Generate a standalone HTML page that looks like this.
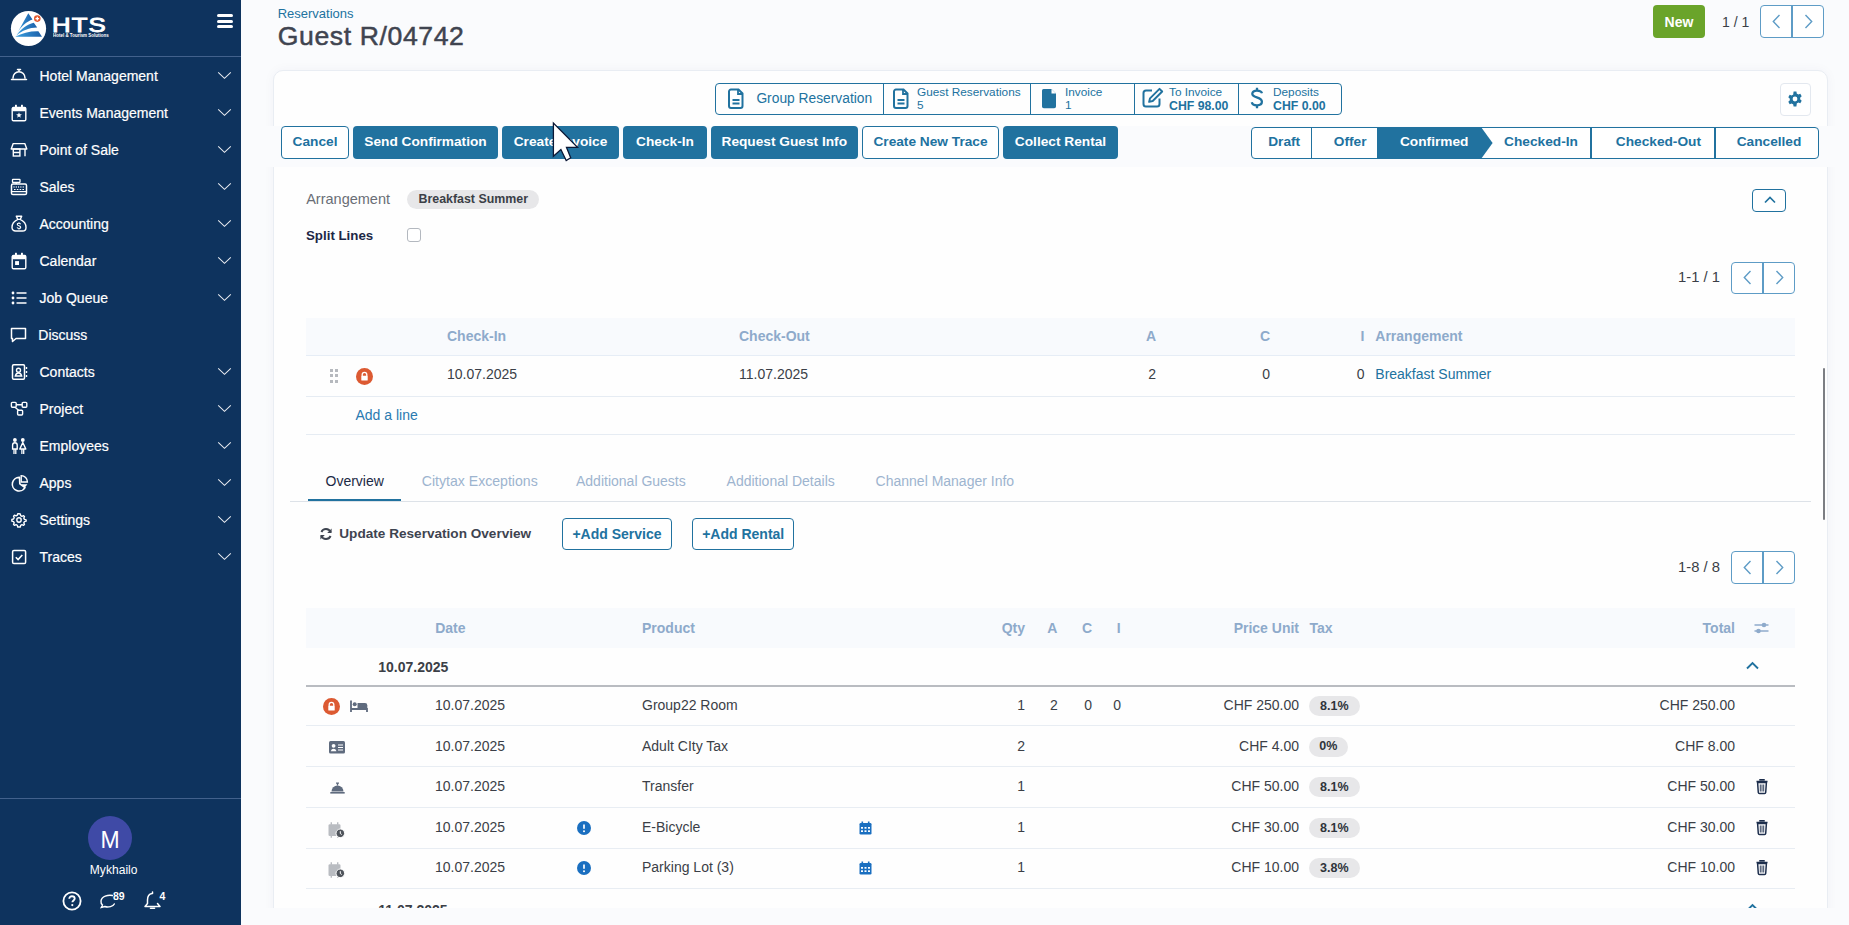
<!DOCTYPE html><html><head><meta charset="utf-8"><style>
*{box-sizing:border-box}
html,body{margin:0;padding:0}
body{width:1849px;height:925px;overflow:hidden;position:relative;background:#fafbfd;font-family:"Liberation Sans", sans-serif;}
.a{position:absolute}
.t{position:absolute;line-height:1;white-space:nowrap}
svg{position:absolute;overflow:visible}
</style></head><body><div class="a" style="left:0px;top:0px;width:241px;height:925px;background:#0e335e"></div>
<svg style="left:0;top:0" width="120" height="56" viewBox="0 0 120 56">
<defs><linearGradient id="lg" x1="0" x2="1" y1="0" y2="0"><stop offset="0" stop-color="#3aa0e0"/><stop offset="1" stop-color="#1c5fa8"/></linearGradient></defs>
<circle cx="28.5" cy="28.5" r="17.6" fill="#fff"/>
<path d="M28.3 13.2 L32.5 19.6 C27 21.5 21 26 16.5 34.5 Z" fill="url(#lg)"/>
<path d="M33.8 22.8 L37.2 27.6 C30 27.5 22 30.5 16.2 35.8 C21 29 27 24.5 33.8 22.8Z" fill="url(#lg)"/>
<path d="M38.4 31.2 L42 36.8 L15.2 36.8 C22 33 30 31 38.4 31.2Z" fill="url(#lg)"/>
<circle cx="37.3" cy="18.6" r="3.3" fill="#e2562b"/>
<path d="M37.3 16.8v3.6M35.5 18.6h3.6" stroke="#fff" stroke-width="1.3"/>
</svg>
<div class="t" style="left:51.6px;top:14.72px;font-size:20.3px;color:#fff;transform:scaleX(1.27);transform-origin:0 0;letter-spacing:0.9px;-webkit-text-stroke:0.9px #fff">HTS</div>
<div class="t" style="left:52.8px;top:33.61px;font-size:4.6px;color:#fff;font-weight:bold;transform:scaleX(0.97);transform-origin:0 0">Hotel &amp; Tourism Solutions</div>
<div class="a" style="left:216.8px;top:14.2px;width:16.4px;height:2.9px;background:#fff;border-radius:1.5px"></div>
<div class="a" style="left:216.8px;top:19.8px;width:16.4px;height:2.9px;background:#fff;border-radius:1.5px"></div>
<div class="a" style="left:216.8px;top:25.4px;width:16.4px;height:2.9px;background:#fff;border-radius:1.5px"></div>
<div class="a" style="left:0px;top:56px;width:241px;height:1.2px;background:#42618c"></div>
<div class="t" style="left:39.5px;top:69.25px;font-size:14px;color:#fff;-webkit-text-stroke:0.2px #fff">Hotel Management</div>
<svg style="left:10px;top:67px" width="18" height="18" viewBox="0 0 18 18"><path d="M1.5 12.5h15M3 11c0-3.5 2.7-6.3 6-6.3s6 2.8 6 6.3M9 4.7V2.8M7.5 2.5h3" stroke="#fff" stroke-width="1.5" fill="none" stroke-linecap="round"/></svg>
<svg style="left:217px;top:70.5px" width="15" height="9" viewBox="0 0 15 9"><path d="M1.2 1.3l6.3 6 6.3-6" fill="none" stroke="#e8ebf0" stroke-width="1.05"/></svg>
<div class="t" style="left:39.5px;top:106.25px;font-size:14px;color:#fff;-webkit-text-stroke:0.2px #fff">Events Management</div>
<svg style="left:10px;top:104px" width="18" height="18" viewBox="0 0 18 18"><path d="M3.5 3.5h11a1.3 1.3 0 0 1 1.3 1.3v10.6a1.3 1.3 0 0 1-1.3 1.3h-11a1.3 1.3 0 0 1-1.3-1.3V4.8a1.3 1.3 0 0 1 1.3-1.3z" fill="none" stroke="#fff" stroke-width="1.4"/><rect x="2" y="3" width="14" height="4.2" rx="1.5" fill="#fff"/><rect x="5" y="0.8" width="1.9" height="2.6" fill="#fff"/><rect x="11" y="0.8" width="1.9" height="2.6" fill="#fff"/><path d="M9 8.3L9.76 10.25 11.85 10.37 10.24 11.7 10.76 13.73 9 12.6 7.24 13.73 7.76 11.7 6.15 10.37 8.24 10.25z" fill="#fff"/></svg>
<svg style="left:217px;top:107.5px" width="15" height="9" viewBox="0 0 15 9"><path d="M1.2 1.3l6.3 6 6.3-6" fill="none" stroke="#e8ebf0" stroke-width="1.05"/></svg>
<div class="t" style="left:39.5px;top:143.25px;font-size:14px;color:#fff;-webkit-text-stroke:0.2px #fff">Point of Sale</div>
<svg style="left:10px;top:141px" width="18" height="18" viewBox="0 0 18 18"><path d="M1.2 8L3.2 2.6h11.6L16.8 8z" fill="none" stroke="#fff" stroke-width="1.4" stroke-linejoin="round"/><rect x="3.3" y="8" width="6.6" height="7" fill="none" stroke="#fff" stroke-width="1.4"/><path d="M3.3 11.5h6.6M15 8v7.2" stroke="#fff" stroke-width="1.4"/></svg>
<svg style="left:217px;top:144.5px" width="15" height="9" viewBox="0 0 15 9"><path d="M1.2 1.3l6.3 6 6.3-6" fill="none" stroke="#e8ebf0" stroke-width="1.05"/></svg>
<div class="t" style="left:39.5px;top:180.25px;font-size:14px;color:#fff;-webkit-text-stroke:0.2px #fff">Sales</div>
<svg style="left:10px;top:178px" width="18" height="18" viewBox="0 0 18 18"><rect x="2.5" y="1.3" width="7.5" height="3.2" rx=".5" fill="none" stroke="#fff" stroke-width="1.3"/><path d="M6.2 4.5v1.5" stroke="#fff" stroke-width="1.3"/><rect x="1.5" y="6" width="15" height="10.6" rx="1.4" fill="none" stroke="#fff" stroke-width="1.5"/><path d="M4 8.3v1.4M6.3 8.3v1.4M8.6 8.3v1.4M10.9 8.3v1.4M13.2 8.3v1.4" stroke="#fff" stroke-width="1"/><path d="M4 11.5h1.6M6.8 11.5h1.6M9.6 11.5h1.6M12.4 11.5h1.6" stroke="#fff" stroke-width="1"/><path d="M1.5 13.6h15" stroke="#fff" stroke-width="1.2"/></svg>
<svg style="left:217px;top:181.5px" width="15" height="9" viewBox="0 0 15 9"><path d="M1.2 1.3l6.3 6 6.3-6" fill="none" stroke="#e8ebf0" stroke-width="1.05"/></svg>
<div class="t" style="left:39.5px;top:217.25px;font-size:14px;color:#fff;-webkit-text-stroke:0.2px #fff">Accounting</div>
<svg style="left:10px;top:215px" width="18" height="18" viewBox="0 0 18 18"><path d="M6.3 1.2h5.4l-1.5 3.2c3.2 1.5 5.8 4.6 5.8 8 0 2.2-1.4 3.6-3.6 3.6H5.6c-2.2 0-3.6-1.4-3.6-3.6 0-3.4 2.6-6.5 5.8-8z" fill="none" stroke="#fff" stroke-width="1.4" stroke-linejoin="round"/><path d="M7.8 4.4h2.4" stroke="#fff" stroke-width="1.2"/><path d="M10.6 9.2c-.3-.7-.9-1-1.7-1-1 0-1.6.5-1.6 1.2 0 1.6 3.4 1 3.4 2.8 0 .8-.7 1.3-1.8 1.3-.9 0-1.6-.4-1.8-1.1M9 7.2v.9M9 13.5v.9" fill="none" stroke="#fff" stroke-width="1.1"/></svg>
<svg style="left:217px;top:218.5px" width="15" height="9" viewBox="0 0 15 9"><path d="M1.2 1.3l6.3 6 6.3-6" fill="none" stroke="#e8ebf0" stroke-width="1.05"/></svg>
<div class="t" style="left:39.5px;top:254.25px;font-size:14px;color:#fff;-webkit-text-stroke:0.2px #fff">Calendar</div>
<svg style="left:10px;top:252px" width="18" height="18" viewBox="0 0 18 18"><path d="M3.5 3.5h11a1.3 1.3 0 0 1 1.3 1.3v10.6a1.3 1.3 0 0 1-1.3 1.3h-11a1.3 1.3 0 0 1-1.3-1.3V4.8a1.3 1.3 0 0 1 1.3-1.3z" fill="none" stroke="#fff" stroke-width="1.4"/><rect x="2" y="3" width="14" height="4.2" rx="1.5" fill="#fff"/><rect x="5" y="0.8" width="1.9" height="2.6" fill="#fff"/><rect x="11" y="0.8" width="1.9" height="2.6" fill="#fff"/><rect x="5.1" y="9.1" width="3.9" height="3.9" fill="#fff"/></svg>
<svg style="left:217px;top:255.5px" width="15" height="9" viewBox="0 0 15 9"><path d="M1.2 1.3l6.3 6 6.3-6" fill="none" stroke="#e8ebf0" stroke-width="1.05"/></svg>
<div class="t" style="left:39.5px;top:291.25px;font-size:14px;color:#fff;-webkit-text-stroke:0.2px #fff">Job Queue</div>
<svg style="left:10px;top:289px" width="18" height="18" viewBox="0 0 18 18"><circle cx="3" cy="4" r="1.4" fill="#fff"/><circle cx="3" cy="9" r="1.4" fill="#fff"/><circle cx="3" cy="14" r="1.4" fill="#fff"/><path d="M6.5 4h10M6.5 9h10M6.5 14h10" stroke="#fff" stroke-width="1.6"/></svg>
<svg style="left:217px;top:292.5px" width="15" height="9" viewBox="0 0 15 9"><path d="M1.2 1.3l6.3 6 6.3-6" fill="none" stroke="#e8ebf0" stroke-width="1.05"/></svg>
<div class="t" style="left:38.3px;top:328.25px;font-size:14px;color:#fff;-webkit-text-stroke:0.2px #fff">Discuss</div>
<svg style="left:10px;top:326px" width="18" height="18" viewBox="0 0 18 18"><path d="M1.5 2.5h14v10H6l-3.5 3v-3h-1z" fill="none" stroke="#fff" stroke-width="1.5" stroke-linejoin="round"/></svg>
<div class="t" style="left:39.5px;top:365.25px;font-size:14px;color:#fff;-webkit-text-stroke:0.2px #fff">Contacts</div>
<svg style="left:10px;top:363px" width="18" height="18" viewBox="0 0 18 18"><rect x="2.5" y="1.8" width="12" height="14.5" rx="1.2" fill="none" stroke="#fff" stroke-width="1.5"/><circle cx="8.5" cy="7.2" r="2" fill="none" stroke="#fff" stroke-width="1.4"/><path d="M5.3 13c.5-2 1.7-3 3.2-3s2.7 1 3.2 3z" fill="none" stroke="#fff" stroke-width="1.3"/><path d="M16.5 4v2M16.5 8v2M16.5 12v2" stroke="#fff" stroke-width="1.4"/></svg>
<svg style="left:217px;top:366.5px" width="15" height="9" viewBox="0 0 15 9"><path d="M1.2 1.3l6.3 6 6.3-6" fill="none" stroke="#e8ebf0" stroke-width="1.05"/></svg>
<div class="t" style="left:39.5px;top:402.25px;font-size:14px;color:#fff;-webkit-text-stroke:0.2px #fff">Project</div>
<svg style="left:10px;top:400px" width="18" height="18" viewBox="0 0 18 18"><rect x="1.4" y="2.4" width="4.8" height="4.8" rx=".9" fill="none" stroke="#fff" stroke-width="1.4"/><rect x="12.2" y="2.4" width="4.6" height="4.8" rx=".9" fill="none" stroke="#fff" stroke-width="1.4"/><rect x="7.6" y="10.2" width="5" height="4.8" rx=".9" fill="none" stroke="#fff" stroke-width="1.4"/><path d="M6.2 4.8h6M5 7.2l3.6 3" stroke="#fff" stroke-width="1.4"/></svg>
<svg style="left:217px;top:403.5px" width="15" height="9" viewBox="0 0 15 9"><path d="M1.2 1.3l6.3 6 6.3-6" fill="none" stroke="#e8ebf0" stroke-width="1.05"/></svg>
<div class="t" style="left:39.5px;top:439.25px;font-size:14px;color:#fff;-webkit-text-stroke:0.2px #fff">Employees</div>
<svg style="left:10px;top:437px" width="18" height="18" viewBox="0 0 18 18"><circle cx="4.9" cy="3" r="1.9" fill="#fff"/><circle cx="12.8" cy="3" r="1.9" fill="#fff"/><path d="M2.6 12V8a2.3 2.3 0 0 1 4.6 0v4z" fill="none" stroke="#fff" stroke-width="1.4"/><path d="M4 12v5M5.8 12v5" stroke="#fff" stroke-width="1.3"/><path d="M12.8 5.5l-3 6.5h6z" fill="none" stroke="#fff" stroke-width="1.4" stroke-linejoin="round"/><path d="M11.9 12v5M13.7 12v5" stroke="#fff" stroke-width="1.3"/></svg>
<svg style="left:217px;top:440.5px" width="15" height="9" viewBox="0 0 15 9"><path d="M1.2 1.3l6.3 6 6.3-6" fill="none" stroke="#e8ebf0" stroke-width="1.05"/></svg>
<div class="t" style="left:39.5px;top:476.25px;font-size:14px;color:#fff;-webkit-text-stroke:0.2px #fff">Apps</div>
<svg style="left:10px;top:474px" width="18" height="18" viewBox="0 0 18 18"><path d="M9.5 3.4A6.8 6.8 0 1 0 15 13.6L9.8 9.8z" fill="none" stroke="#fff" stroke-width="1.6" stroke-linejoin="round"/><path d="M11.2 1.6v6.4h6.2A6.3 6.3 0 0 0 11.2 1.6z" fill="none" stroke="#fff" stroke-width="1.4"/><path d="M11.6 10.2h5.8l-2.9 3.8z" fill="#fff"/></svg>
<svg style="left:217px;top:477.5px" width="15" height="9" viewBox="0 0 15 9"><path d="M1.2 1.3l6.3 6 6.3-6" fill="none" stroke="#e8ebf0" stroke-width="1.05"/></svg>
<div class="t" style="left:39.5px;top:513.25px;font-size:14px;color:#fff;-webkit-text-stroke:0.2px #fff">Settings</div>
<svg style="left:10px;top:511px" width="18" height="18" viewBox="0 0 18 18"><g transform="translate(9 9) scale(0.84) translate(-9 -9)"><path d="M9 1.5l1.5.3.5 2 1.5.8 1.9-.8 1.1 1.1-.8 1.9.8 1.5 2 .5v1.6l-2 .5-.8 1.5.8 1.9-1.1 1.1-1.9-.8-1.5.8-.5 2H7.5l-.5-2-1.5-.8-1.9.8-1.1-1.1.8-1.9-.8-1.5-2-.5V8.3l2-.5.8-1.5-.8-1.9 1.1-1.1 1.9.8L7 3.300 7.5 1.5z" fill="none" stroke="#fff" stroke-width="1.65" stroke-linejoin="round"/><circle cx="9" cy="9" r="2.6" fill="none" stroke="#fff" stroke-width="1.65"/></g></svg>
<svg style="left:217px;top:514.5px" width="15" height="9" viewBox="0 0 15 9"><path d="M1.2 1.3l6.3 6 6.3-6" fill="none" stroke="#e8ebf0" stroke-width="1.05"/></svg>
<div class="t" style="left:39.5px;top:550.25px;font-size:14px;color:#fff;-webkit-text-stroke:0.2px #fff">Traces</div>
<svg style="left:10px;top:548px" width="18" height="18" viewBox="0 0 18 18"><rect x="2.6" y="2.4" width="13" height="13.2" rx="1.3" fill="none" stroke="#fff" stroke-width="1.5"/><path d="M5.8 9.2l2.3 2.3 4.2-4.5" fill="none" stroke="#fff" stroke-width="1.6"/></svg>
<svg style="left:217px;top:551.5px" width="15" height="9" viewBox="0 0 15 9"><path d="M1.2 1.3l6.3 6 6.3-6" fill="none" stroke="#e8ebf0" stroke-width="1.05"/></svg>
<div class="a" style="left:0px;top:798px;width:241px;height:1.2px;background:#42618c"></div>
<div class="a" style="left:88px;top:816px;width:44px;height:44px;background:#3f4aa6;border-radius:50%"></div>
<div class="t" style="left:110px;top:828.73px;font-size:23px;color:#fff;transform:translateX(-50%)">M</div>
<div class="t" style="left:89.8px;top:863.84px;font-size:12px;color:#fff;letter-spacing:0.05px">Mykhailo</div>
<svg style="left:62px;top:891px" width="20" height="20" viewBox="0 0 20 20"><circle cx="10" cy="10" r="8.6" fill="none" stroke="#fff" stroke-width="1.8"/><path d="M7.3 7.8c0-1.6 1.2-2.6 2.7-2.6s2.7 1 2.7 2.4c0 1.8-2.3 1.9-2.3 3.7" fill="none" stroke="#fff" stroke-width="1.9"/><circle cx="10.3" cy="14.1" r="1.1" fill="#fff"/></svg>
<svg style="left:99px;top:892px" width="18" height="18" viewBox="0 0 18 18"><path d="M13.5 3.5C9 2.5 2.5 4.5 2 9c-.2 1.8.6 3.2 1.5 4l-1.2 2.5 3.5-1c3.5 1.2 8.5-.2 9.5-2.5" fill="none" stroke="#fff" stroke-width="1.4" stroke-linecap="round"/></svg>
<div class="t" style="left:113px;top:890.51px;font-size:10.5px;color:#fff;font-weight:bold;">89</div>
<svg style="left:143px;top:890px" width="19" height="21" viewBox="0 0 19 21"><path d="M9.5 2v1.5M9 3.5C6 4 4.5 6.5 4.5 10v3.5L2 16.5h15l-2.5-3" fill="none" stroke="#fff" stroke-width="1.5" stroke-linecap="round" stroke-linejoin="round"/><path d="M7.5 18.3h4" stroke="#fff" stroke-width="1.6" stroke-linecap="round"/></svg>
<div class="t" style="left:159.5px;top:890.51px;font-size:10.5px;color:#fff;font-weight:bold;">4</div>
<div class="t" style="left:277.7px;top:6.90px;font-size:13px;color:#21729f;">Reservations</div>
<div class="t" style="left:277.8px;top:23.48px;font-size:26.6px;color:#3f4450;-webkit-text-stroke:0.5px #3f4450;letter-spacing:0.6px">Guest R/04742</div>
<div class="a" style="left:1653px;top:5px;width:52px;height:33px;background:#6aa42a;border-radius:4px"></div>
<div class="t" style="left:1679px;top:15.15px;font-size:14px;color:#fff;font-weight:bold;transform:translateX(-50%)">New</div>
<div class="t" style="left:1722px;top:15.15px;font-size:14px;color:#3b3f47;">1 / 1</div>
<div class="a" style="left:1760px;top:5px;width:64px;height:33px;border:1px solid #5e9cc6;border-radius:4px;background:#fff"></div>
<div class="a" style="left:1791px;top:5px;width:2px;height:33px;background:#5e9cc6"></div>
<svg style="left:1771.5px;top:14.0px" width="9" height="15" viewBox="0 0 9 15"><path d="M7.5 1L1.3 7.5l6.2 6.5" fill="none" stroke="#5e9cc6" stroke-width="1.4"/></svg>
<svg style="left:1803.5px;top:14.0px" width="9" height="15" viewBox="0 0 9 15"><path d="M1.5 1l6.2 6.5-6.2 6.5" fill="none" stroke="#5e9cc6" stroke-width="1.4"/></svg>
<div class="a" style="left:273px;top:70px;width:1554.5px;height:860px;background:#fefefe;border:1px solid #e9edf3;border-radius:10px 10px 0 0;box-shadow:0 0 12px rgba(30,50,90,0.04)"></div>
<div class="a" style="left:241px;top:126px;width:1608px;height:41px;background:#fafbfd"></div>
<div class="a" style="left:715.4px;top:82.5px;width:627px;height:32px;border:1px solid #21729f;border-radius:4px"></div>
<div class="a" style="left:882.7px;top:82.5px;width:1px;height:32px;background:#21729f"></div>
<div class="a" style="left:1029.9px;top:82.5px;width:1px;height:32px;background:#21729f"></div>
<div class="a" style="left:1133.7px;top:82.5px;width:1px;height:32px;background:#21729f"></div>
<div class="a" style="left:1237.8px;top:82.5px;width:1px;height:32px;background:#21729f"></div>
<svg style="left:728.4px;top:87.5px" width="16" height="21" viewBox="0 0 16 21"><path d="M3 1.5h7.5l4 4V18a2 2 0 0 1-2 2H3a2 2 0 0 1-2-2V3.5a2 2 0 0 1 2-2z" fill="none" stroke="#21729f" stroke-width="2"/><path d="M10 1.5v4.5h4.5M4.5 12h7M4.5 15.5h7" fill="none" stroke="#21729f" stroke-width="1.8"/></svg>
<div class="t" style="left:756.4px;top:92.32px;font-size:13.8px;color:#21729f;">Group Reservation</div>
<svg style="left:893px;top:87.5px" width="16" height="21" viewBox="0 0 16 21"><path d="M3 1.5h7.5l4 4V18a2 2 0 0 1-2 2H3a2 2 0 0 1-2-2V3.5a2 2 0 0 1 2-2z" fill="none" stroke="#21729f" stroke-width="2"/><path d="M10 1.5v4.5h4.5M4.5 12h7M4.5 15.5h7" fill="none" stroke="#21729f" stroke-width="1.8"/></svg>
<div class="t" style="left:917px;top:86.91px;font-size:11.8px;color:#21729f;">Guest Reservations</div>
<div class="t" style="left:917px;top:100.21px;font-size:11.8px;color:#21729f;">5</div>
<svg style="left:1041px;top:87.5px" width="16" height="21" viewBox="0 0 16 21"><path d="M2.5 1h8l4.5 4.5V18.5a1.8 1.8 0 0 1-1.8 1.8H2.8A1.8 1.8 0 0 1 1 18.5V2.8A1.8 1.8 0 0 1 2.5 1z" fill="#21729f"/><path d="M10.5 1v4.5H15" fill="#fff"/></svg>
<div class="t" style="left:1065px;top:86.91px;font-size:11.8px;color:#21729f;">Invoice</div>
<div class="t" style="left:1065px;top:100.21px;font-size:11.8px;color:#21729f;">1</div>
<svg style="left:1142px;top:87px" width="22" height="21" viewBox="0 0 22 21"><path d="M10 3.5H4a2.5 2.5 0 0 0-2.5 2.5v11A2.5 2.5 0 0 0 4 19.5h11a2.5 2.5 0 0 0 2.5-2.5v-5.5" fill="none" stroke="#21729f" stroke-width="2"/><path d="M17.5 1.8l2.7 2.7-9.5 9.5-3.6.9.9-3.6z" fill="none" stroke="#21729f" stroke-width="1.9" stroke-linejoin="round"/></svg>
<div class="t" style="left:1169px;top:86.91px;font-size:11.8px;color:#21729f;">To Invoice</div>
<div class="t" style="left:1169px;top:99.79px;font-size:12.3px;color:#21729f;font-weight:bold;">CHF 98.00</div>
<svg style="left:1249.5px;top:86.5px" width="14" height="22" viewBox="0 0 14 22"><path d="M12 6.3C11.5 4.5 9.8 3.6 7 3.6 4 3.6 2.3 4.9 2.3 6.8c0 4.6 9.6 2.6 9.6 8 0 2.1-1.9 3.5-4.9 3.5-3 0-4.8-1.1-5.2-3.1" fill="none" stroke="#21729f" stroke-width="2.3"/><path d="M7 0.8v3M7 18v3.2" stroke="#21729f" stroke-width="2.3"/></svg>
<div class="t" style="left:1273px;top:86.91px;font-size:11.8px;color:#21729f;">Deposits</div>
<div class="t" style="left:1273px;top:99.79px;font-size:12.3px;color:#21729f;font-weight:bold;">CHF 0.00</div>
<div class="a" style="left:1780px;top:82.5px;width:31px;height:33px;border:1px solid #e3e8ef;border-radius:4px;background:#fff"></div>
<svg style="left:1787.2px;top:90.5px" width="16" height="16" viewBox="0 0 16 16"><path fill="#21729f" fill-rule="evenodd" d="M6.6 0.6h2.8l.45 2.05a5.6 5.6 0 0 1 1.45.84l2-.65 1.4 2.42-1.56 1.4a5.6 5.6 0 0 1 0 1.68l1.56 1.4-1.4 2.42-2-.65a5.6 5.6 0 0 1-1.45.84L9.4 15.4H6.6l-.45-2.05a5.6 5.6 0 0 1-1.45-.84l-2 .65-1.4-2.42 1.56-1.4a5.6 5.6 0 0 1 0-1.68L1.3 6.26l1.4-2.42 2 .65a5.6 5.6 0 0 1 1.45-.84zM8 5.6a2.4 2.4 0 1 0 0 4.8 2.4 2.4 0 0 0 0-4.8z"/></svg>
<div class="a" style="left:281px;top:126px;width:68px;height:33px;background:#fff;border:1px solid #21729f;border-radius:4px"></div>
<div class="t" style="left:315.0px;top:135.40px;font-size:13.7px;color:#21729f;font-weight:bold;transform:translateX(-50%)">Cancel</div>
<div class="a" style="left:353px;top:126px;width:145px;height:33px;background:#21729f;border-radius:4px"></div>
<div class="t" style="left:425.5px;top:135.40px;font-size:13.7px;color:#fff;font-weight:bold;transform:translateX(-50%)">Send Confirmation</div>
<div class="a" style="left:502px;top:126px;width:117px;height:33px;background:#21729f;border-radius:4px"></div>
<div class="t" style="left:560.5px;top:135.40px;font-size:13.7px;color:#fff;font-weight:bold;transform:translateX(-50%)">Create Invoice</div>
<div class="a" style="left:623px;top:126px;width:84px;height:33px;background:#21729f;border-radius:4px"></div>
<div class="t" style="left:665.0px;top:135.40px;font-size:13.7px;color:#fff;font-weight:bold;transform:translateX(-50%)">Check-In</div>
<div class="a" style="left:711px;top:126px;width:146.5px;height:33px;background:#21729f;border-radius:4px"></div>
<div class="t" style="left:784.25px;top:135.40px;font-size:13.7px;color:#fff;font-weight:bold;transform:translateX(-50%)">Request Guest Info</div>
<div class="a" style="left:862px;top:126px;width:137px;height:33px;background:#fff;border:1px solid #21729f;border-radius:4px"></div>
<div class="t" style="left:930.5px;top:135.40px;font-size:13.7px;color:#21729f;font-weight:bold;transform:translateX(-50%)">Create New Trace</div>
<div class="a" style="left:1003px;top:126px;width:115px;height:33px;background:#21729f;border-radius:4px"></div>
<div class="t" style="left:1060.5px;top:135.40px;font-size:13.7px;color:#fff;font-weight:bold;transform:translateX(-50%)">Collect Rental</div>
<div class="a" style="left:1251.4px;top:126.5px;width:568px;height:32px;background:#fff;border:1px solid #21729f;border-radius:4px"></div>
<div class="a" style="left:1310.5px;top:126.5px;width:1.5px;height:32px;background:#21729f"></div>
<svg style="left:1377px;top:126.5px" width="117" height="32" viewBox="0 0 117 32"><path d="M0 0H104L115.6 16 104 32H0z" fill="#21729f"/></svg>
<div class="a" style="left:1590.3px;top:126.5px;width:1.5px;height:32px;background:#21729f"></div>
<div class="a" style="left:1714px;top:126.5px;width:1.5px;height:32px;background:#21729f"></div>
<div class="t" style="left:1284.2px;top:135.40px;font-size:13.7px;color:#21729f;font-weight:bold;transform:translateX(-50%)">Draft</div>
<div class="t" style="left:1350.2px;top:135.40px;font-size:13.7px;color:#21729f;font-weight:bold;transform:translateX(-50%)">Offer</div>
<div class="t" style="left:1434.2px;top:135.40px;font-size:13.7px;color:#fff;font-weight:bold;transform:translateX(-50%)">Confirmed</div>
<div class="t" style="left:1541px;top:135.40px;font-size:13.7px;color:#21729f;font-weight:bold;transform:translateX(-50%)">Checked-In</div>
<div class="t" style="left:1658.4px;top:135.40px;font-size:13.7px;color:#21729f;font-weight:bold;transform:translateX(-50%)">Checked-Out</div>
<div class="t" style="left:1769px;top:135.40px;font-size:13.7px;color:#21729f;font-weight:bold;transform:translateX(-50%)">Cancelled</div>
<div class="t" style="left:306.2px;top:191.73px;font-size:14.5px;color:#6a6e76;">Arrangement</div>
<div class="a" style="left:407px;top:190px;width:132px;height:19px;background:#e7e7e9;border-radius:10px"></div>
<div class="t" style="left:418.5px;top:193.00px;font-size:12.4px;color:#3b3f47;font-weight:bold;">Breakfast Summer</div>
<div class="t" style="left:306px;top:228.74px;font-size:13.3px;color:#1d2746;font-weight:bold;">Split Lines</div>
<div class="a" style="left:407px;top:228.2px;width:14px;height:14px;border:1px solid #b3b8bf;border-radius:3px;background:#fff"></div>
<div class="a" style="left:1752.4px;top:189.3px;width:34px;height:22.5px;border:1px solid #21729f;border-radius:4px;background:#fff"></div>
<svg style="left:1763.5px;top:196px" width="12" height="8" viewBox="0 0 12 8"><path d="M1 6.5l5-5 5 5" fill="none" stroke="#21729f" stroke-width="1.7"/></svg>
<div class="t" style="left:1678px;top:270.47px;font-size:14.8px;color:#3b3f47;">1-1 / 1</div>
<div class="a" style="left:1731px;top:261.5px;width:64px;height:32.5px;border:1px solid #5e9cc6;border-radius:4px;background:#fff"></div>
<div class="a" style="left:1762px;top:261.5px;width:2px;height:32.5px;background:#5e9cc6"></div>
<svg style="left:1742.5px;top:270.25px" width="9" height="15" viewBox="0 0 9 15"><path d="M7.5 1L1.3 7.5l6.2 6.5" fill="none" stroke="#5e9cc6" stroke-width="1.4"/></svg>
<svg style="left:1774.5px;top:270.25px" width="9" height="15" viewBox="0 0 9 15"><path d="M1.5 1l6.2 6.5-6.2 6.5" fill="none" stroke="#5e9cc6" stroke-width="1.4"/></svg>
<div class="a" style="left:306px;top:318px;width:1489px;height:38px;background:#f8fafd;border-bottom:1px solid #e6edf6"></div>
<div class="t" style="left:447px;top:329.15px;font-size:14px;color:#8eaacb;font-weight:bold;">Check-In</div>
<div class="t" style="left:739px;top:329.15px;font-size:14px;color:#8eaacb;font-weight:bold;">Check-Out</div>
<div class="t" style="right:693px;top:329.15px;font-size:14px;color:#8eaacb;font-weight:bold;">A</div>
<div class="t" style="right:579px;top:329.15px;font-size:14px;color:#8eaacb;font-weight:bold;">C</div>
<div class="t" style="right:484.5px;top:329.15px;font-size:14px;color:#8eaacb;font-weight:bold;">I</div>
<div class="t" style="left:1375.3px;top:329.15px;font-size:14px;color:#8eaacb;font-weight:bold;">Arrangement</div>
<div class="a" style="left:306px;top:396px;width:1489px;height:1px;background:#e6ecf3"></div>
<div class="a" style="left:306px;top:434px;width:1489px;height:1px;background:#e6ecf3"></div>
<div class="a" style="left:329.5px;top:369px;width:3px;height:3px;background:#b6b9be"></div>
<div class="a" style="left:335px;top:369px;width:3px;height:3px;background:#b6b9be"></div>
<div class="a" style="left:329.5px;top:374px;width:3px;height:3px;background:#b6b9be"></div>
<div class="a" style="left:335px;top:374px;width:3px;height:3px;background:#b6b9be"></div>
<div class="a" style="left:329.5px;top:379.5px;width:3px;height:3px;background:#b6b9be"></div>
<div class="a" style="left:335px;top:379.5px;width:3px;height:3px;background:#b6b9be"></div>
<svg style="left:355.9px;top:367.9px" width="17" height="17" viewBox="0 0 17 17"><circle cx="8.5" cy="8.5" r="8.5" fill="#dc5a32"/><path d="M6.2 8V6.6a2.3 2.3 0 0 1 4.6 0V8" fill="none" stroke="#fff" stroke-width="1.3"/><rect x="5.3" y="7.8" width="6.4" height="4.8" rx=".6" fill="#fff"/></svg>
<div class="t" style="left:447px;top:367.15px;font-size:14px;color:#3b3f47;">10.07.2025</div>
<div class="t" style="left:739px;top:367.15px;font-size:14px;color:#3b3f47;">11.07.2025</div>
<div class="t" style="right:693px;top:367.15px;font-size:14px;color:#3b3f47;">2</div>
<div class="t" style="right:579px;top:367.15px;font-size:14px;color:#3b3f47;">0</div>
<div class="t" style="right:484.5px;top:367.15px;font-size:14px;color:#3b3f47;">0</div>
<div class="t" style="left:1375.3px;top:367.15px;font-size:14px;color:#21729f;">Breakfast Summer</div>
<div class="t" style="left:355.5px;top:407.75px;font-size:14px;color:#2a7ab0;">Add a line</div>
<div class="a" style="left:1823px;top:368px;width:2.2px;height:152px;background:#7c7e83;border-radius:1px"></div>
<div class="a" style="left:290px;top:500.5px;width:1521px;height:1.2px;background:#dde2e8"></div>
<div class="a" style="left:308px;top:499px;width:93px;height:2.2px;background:#21729f"></div>
<div class="t" style="left:325.5px;top:474.15px;font-size:14px;color:#1c2a45;">Overview</div>
<div class="t" style="left:421.8px;top:474.06px;font-size:14.1px;color:#9db4cf;">Citytax Exceptions</div>
<div class="t" style="left:576px;top:474.15px;font-size:14px;color:#9db4cf;">Additional Guests</div>
<div class="t" style="left:726.6px;top:474.15px;font-size:14px;color:#9db4cf;">Additional Details</div>
<div class="t" style="left:875.6px;top:474.15px;font-size:14px;color:#9db4cf;">Channel Manager Info</div>
<svg style="left:318.5px;top:526.5px" width="14" height="14" viewBox="0 0 14 14"><path d="M11.6 5.2A5 5 0 0 0 2.4 5M2.4 8.8a5 5 0 0 0 9.2.2" fill="none" stroke="#3e4450" stroke-width="1.9"/><path d="M12.6 1.5v4.5H8.2zM1.4 12.5V8h4.4z" fill="#3e4450"/></svg>
<div class="t" style="left:339.3px;top:527.49px;font-size:13.6px;color:#3e4450;font-weight:bold;">Update Reservation Overview</div>
<div class="a" style="left:562.2px;top:518.3px;width:110px;height:32px;border:1px solid #21729f;border-radius:4px;background:#fff"></div>
<div class="t" style="left:617px;top:527.15px;font-size:14px;color:#21729f;font-weight:bold;transform:translateX(-50%)">+Add Service</div>
<div class="a" style="left:692.4px;top:518.3px;width:101.6px;height:32px;border:1px solid #21729f;border-radius:4px;background:#fff"></div>
<div class="t" style="left:743.2px;top:527.15px;font-size:14px;color:#21729f;font-weight:bold;transform:translateX(-50%)">+Add Rental</div>
<div class="t" style="left:1678px;top:560.47px;font-size:14.8px;color:#3b3f47;">1-8 / 8</div>
<div class="a" style="left:1731px;top:551px;width:64px;height:33px;border:1px solid #5e9cc6;border-radius:4px;background:#fff"></div>
<div class="a" style="left:1762px;top:551px;width:2px;height:33px;background:#5e9cc6"></div>
<svg style="left:1742.5px;top:560.0px" width="9" height="15" viewBox="0 0 9 15"><path d="M7.5 1L1.3 7.5l6.2 6.5" fill="none" stroke="#5e9cc6" stroke-width="1.4"/></svg>
<svg style="left:1774.5px;top:560.0px" width="9" height="15" viewBox="0 0 9 15"><path d="M1.5 1l6.2 6.5-6.2 6.5" fill="none" stroke="#5e9cc6" stroke-width="1.4"/></svg>
<div class="a" style="left:306px;top:607.6px;width:1489px;height:40px;background:#f8fafd"></div>
<div class="t" style="left:435.2px;top:620.55px;font-size:14px;color:#8eaacb;font-weight:bold;">Date</div>
<div class="t" style="left:642px;top:620.55px;font-size:14px;color:#8eaacb;font-weight:bold;">Product</div>
<div class="t" style="right:824px;top:620.55px;font-size:14px;color:#8eaacb;font-weight:bold;">Qty</div>
<div class="t" style="right:791.5999999999999px;top:620.55px;font-size:14px;color:#8eaacb;font-weight:bold;">A</div>
<div class="t" style="right:757px;top:620.55px;font-size:14px;color:#8eaacb;font-weight:bold;">C</div>
<div class="t" style="right:728.4000000000001px;top:620.55px;font-size:14px;color:#8eaacb;font-weight:bold;">I</div>
<div class="t" style="right:550px;top:620.55px;font-size:14px;color:#8eaacb;font-weight:bold;">Price Unit</div>
<div class="t" style="left:1309.5px;top:620.55px;font-size:14px;color:#8eaacb;font-weight:bold;">Tax</div>
<div class="t" style="right:114px;top:620.55px;font-size:14px;color:#8eaacb;font-weight:bold;">Total</div>
<svg style="left:1754px;top:621px" width="15" height="14" viewBox="0 0 15 14"><path d="M0.5 4h14M0.5 10h14" stroke="#8eaacb" stroke-width="1.6"/><circle cx="10" cy="4" r="2.3" fill="#8eaacb"/><circle cx="4.5" cy="10" r="2.3" fill="#8eaacb"/></svg>
<div class="t" style="left:378.3px;top:660.15px;font-size:14px;color:#3b3f47;font-weight:bold;">10.07.2025</div>
<svg style="left:1745.5px;top:661px" width="13" height="9" viewBox="0 0 13 9"><path d="M1 7.5l5.5-5.5 5.5 5.5" fill="none" stroke="#21729f" stroke-width="1.9"/></svg>
<div class="a" style="left:306px;top:685px;width:1489px;height:1.5px;background:#b9bcc1"></div>
<div class="t" style="left:435px;top:698.05px;font-size:14px;color:#3b3f47;">10.07.2025</div>
<div class="t" style="left:642px;top:698.05px;font-size:14px;color:#3b3f47;">Group22 Room</div>
<div class="t" style="right:824px;top:698.05px;font-size:14px;color:#3b3f47;">1</div>
<div class="t" style="right:791.3px;top:698.05px;font-size:14px;color:#3b3f47;">2</div>
<div class="t" style="right:757px;top:698.05px;font-size:14px;color:#3b3f47;">0</div>
<div class="t" style="right:728px;top:698.05px;font-size:14px;color:#3b3f47;">0</div>
<div class="t" style="right:550px;top:698.05px;font-size:14px;color:#3b3f47;">CHF 250.00</div>
<div class="a" style="left:1308.8px;top:696.0px;width:51px;height:20px;background:#e7e7e9;border-radius:10px"></div>
<div class="t" style="left:1334.3px;top:699.82px;font-size:12.5px;color:#2f343b;font-weight:bold;transform:translateX(-50%)">8.1%</div>
<div class="t" style="right:114px;top:698.05px;font-size:14px;color:#3b3f47;">CHF 250.00</div>
<div class="a" style="left:306px;top:725px;width:1489px;height:1px;background:#e8edf3"></div>
<svg style="left:322.8px;top:697.9px" width="17" height="17" viewBox="0 0 17 17"><circle cx="8.5" cy="8.5" r="8.5" fill="#dc5a32"/><path d="M6.2 8V6.6a2.3 2.3 0 0 1 4.6 0V8" fill="none" stroke="#fff" stroke-width="1.3"/><rect x="5.3" y="7.8" width="6.4" height="4.8" rx=".6" fill="#fff"/></svg>
<svg style="left:349.8px;top:700px" width="18" height="12" viewBox="0 0 18 12"><path d="M1 0.5v11.5M1 9h16v3" stroke="#5f6b7e" stroke-width="1.8" fill="none"/><circle cx="4.7" cy="4.3" r="2" fill="#5f6b7e"/><path d="M7.5 3h7.5a2.3 2.3 0 0 1 2.3 2.3V8H7.5z" fill="#5f6b7e"/></svg>
<div class="t" style="left:435px;top:738.55px;font-size:14px;color:#3b3f47;">10.07.2025</div>
<div class="t" style="left:642px;top:738.55px;font-size:14px;color:#3b3f47;">Adult CIty Tax</div>
<div class="t" style="right:824px;top:738.55px;font-size:14px;color:#3b3f47;">2</div>
<div class="t" style="right:550px;top:738.55px;font-size:14px;color:#3b3f47;">CHF 4.00</div>
<div class="a" style="left:1308.8px;top:736.5px;width:39px;height:20px;background:#e7e7e9;border-radius:10px"></div>
<div class="t" style="left:1328.3px;top:740.32px;font-size:12.5px;color:#2f343b;font-weight:bold;transform:translateX(-50%)">0%</div>
<div class="t" style="right:114px;top:738.55px;font-size:14px;color:#3b3f47;">CHF 8.00</div>
<div class="a" style="left:306px;top:766px;width:1489px;height:1px;background:#e8edf3"></div>
<svg style="left:328.8px;top:740.6px" width="16" height="12.5" viewBox="0 0 16 12.5"><rect x="0" y="0" width="16" height="12.5" rx="1.5" fill="#5f6b7e"/><circle cx="4.6" cy="4.8" r="1.9" fill="#fff"/><path d="M1.8 10.3c.4-1.7 1.5-2.5 2.8-2.5s2.4.8 2.8 2.5z" fill="#fff"/><path d="M9 4h5M9 6.5h5M9 9h5" stroke="#fff" stroke-width="1.1"/></svg>
<div class="t" style="left:435px;top:779.30px;font-size:14px;color:#3b3f47;">10.07.2025</div>
<div class="t" style="left:642px;top:779.30px;font-size:14px;color:#3b3f47;">Transfer</div>
<div class="t" style="right:824px;top:779.30px;font-size:14px;color:#3b3f47;">1</div>
<div class="t" style="right:550px;top:779.30px;font-size:14px;color:#3b3f47;">CHF 50.00</div>
<div class="a" style="left:1308.8px;top:777.25px;width:51px;height:20px;background:#e7e7e9;border-radius:10px"></div>
<div class="t" style="left:1334.3px;top:781.07px;font-size:12.5px;color:#2f343b;font-weight:bold;transform:translateX(-50%)">8.1%</div>
<div class="t" style="right:114px;top:779.30px;font-size:14px;color:#3b3f47;">CHF 50.00</div>
<svg style="left:1756px;top:779.25px" width="12" height="15" viewBox="0 0 12 15"><path d="M4 1.5V.8h4v.7M.5 2.5h11" stroke="#1e2f4d" stroke-width="1.5" fill="none"/><path d="M1.6 3.5h8.8l-.7 10a1.2 1.2 0 0 1-1.2 1.1H3.5a1.2 1.2 0 0 1-1.2-1.1z" fill="none" stroke="#1e2f4d" stroke-width="1.5"/><path d="M4.3 5.5v7M6 5.5v7M7.7 5.5v7" stroke="#1e2f4d" stroke-width=".9"/></svg>
<div class="a" style="left:306px;top:807px;width:1489px;height:1px;background:#e8edf3"></div>
<svg style="left:329.6px;top:781.5px" width="15" height="12" viewBox="0 0 15 12"><path d="M1.5 9.5a6 6 0 0 1 12 0z" fill="#5f6b7e"/><path d="M0.3 10.8h14.4" stroke="#5f6b7e" stroke-width="1.6"/><path d="M7.5 1.5v2M6 1.2h3" stroke="#5f6b7e" stroke-width="1.3"/></svg>
<div class="t" style="left:435px;top:819.80px;font-size:14px;color:#3b3f47;">10.07.2025</div>
<div class="t" style="left:642px;top:819.80px;font-size:14px;color:#3b3f47;">E-Bicycle</div>
<div class="t" style="right:824px;top:819.80px;font-size:14px;color:#3b3f47;">1</div>
<div class="t" style="right:550px;top:819.80px;font-size:14px;color:#3b3f47;">CHF 30.00</div>
<div class="a" style="left:1308.8px;top:817.75px;width:51px;height:20px;background:#e7e7e9;border-radius:10px"></div>
<div class="t" style="left:1334.3px;top:821.57px;font-size:12.5px;color:#2f343b;font-weight:bold;transform:translateX(-50%)">8.1%</div>
<div class="t" style="right:114px;top:819.80px;font-size:14px;color:#3b3f47;">CHF 30.00</div>
<svg style="left:1756px;top:819.75px" width="12" height="15" viewBox="0 0 12 15"><path d="M4 1.5V.8h4v.7M.5 2.5h11" stroke="#1e2f4d" stroke-width="1.5" fill="none"/><path d="M1.6 3.5h8.8l-.7 10a1.2 1.2 0 0 1-1.2 1.1H3.5a1.2 1.2 0 0 1-1.2-1.1z" fill="none" stroke="#1e2f4d" stroke-width="1.5"/><path d="M4.3 5.5v7M6 5.5v7M7.7 5.5v7" stroke="#1e2f4d" stroke-width=".9"/></svg>
<svg style="left:577.4px;top:820.75px" width="14" height="14" viewBox="0 0 14 14"><circle cx="7" cy="7" r="7" fill="#1a6fc0"/><path d="M7 3.5v4.3" stroke="#fff" stroke-width="1.7"/><circle cx="7" cy="10.2" r="1" fill="#fff"/></svg>
<svg style="left:858.5px;top:820.75px" width="13" height="14" viewBox="0 0 13 14"><rect x="0.5" y="2" width="12" height="11.5" rx="1.3" fill="#1a6fc0"/><path d="M3.3 .5v2.5M9.7 .5v2.5" stroke="#1a6fc0" stroke-width="1.6"/><g fill="#fff"><rect x="2" y="6" width="2" height="1.7"/><rect x="5.5" y="6" width="2" height="1.7"/><rect x="9" y="6" width="2" height="1.7"/><rect x="2" y="9.3" width="2" height="1.7"/><rect x="5.5" y="9.3" width="2" height="1.7"/><rect x="9" y="9.3" width="2" height="1.7"/></g></svg>
<div class="a" style="left:306px;top:848px;width:1489px;height:1px;background:#e8edf3"></div>
<svg style="left:327.7px;top:821.75px" width="17" height="16" viewBox="0 0 17 16"><rect x="0.5" y="2.3" width="12" height="11.7" rx="1.3" fill="#b9bcc1"/><path d="M3.3 .3v2.5M9.7 .3v2.5M3.3 13.5v2.2M9.7 13.5v2.2" stroke="#b9bcc1" stroke-width="1.4"/><circle cx="12.3" cy="11.3" r="4.3" fill="#4f545b" stroke="#fff" stroke-width="1"/><path d="M12.3 9.2v2.3l1.4 1" stroke="#fff" stroke-width="1" fill="none"/></svg>
<div class="t" style="left:435px;top:860.30px;font-size:14px;color:#3b3f47;">10.07.2025</div>
<div class="t" style="left:642px;top:860.30px;font-size:14px;color:#3b3f47;">Parking Lot (3)</div>
<div class="t" style="right:824px;top:860.30px;font-size:14px;color:#3b3f47;">1</div>
<div class="t" style="right:550px;top:860.30px;font-size:14px;color:#3b3f47;">CHF 10.00</div>
<div class="a" style="left:1308.8px;top:858.25px;width:51px;height:20px;background:#e7e7e9;border-radius:10px"></div>
<div class="t" style="left:1334.3px;top:862.07px;font-size:12.5px;color:#2f343b;font-weight:bold;transform:translateX(-50%)">3.8%</div>
<div class="t" style="right:114px;top:860.30px;font-size:14px;color:#3b3f47;">CHF 10.00</div>
<svg style="left:1756px;top:860.25px" width="12" height="15" viewBox="0 0 12 15"><path d="M4 1.5V.8h4v.7M.5 2.5h11" stroke="#1e2f4d" stroke-width="1.5" fill="none"/><path d="M1.6 3.5h8.8l-.7 10a1.2 1.2 0 0 1-1.2 1.1H3.5a1.2 1.2 0 0 1-1.2-1.1z" fill="none" stroke="#1e2f4d" stroke-width="1.5"/><path d="M4.3 5.5v7M6 5.5v7M7.7 5.5v7" stroke="#1e2f4d" stroke-width=".9"/></svg>
<svg style="left:577.4px;top:861.25px" width="14" height="14" viewBox="0 0 14 14"><circle cx="7" cy="7" r="7" fill="#1a6fc0"/><path d="M7 3.5v4.3" stroke="#fff" stroke-width="1.7"/><circle cx="7" cy="10.2" r="1" fill="#fff"/></svg>
<svg style="left:858.5px;top:861.25px" width="13" height="14" viewBox="0 0 13 14"><rect x="0.5" y="2" width="12" height="11.5" rx="1.3" fill="#1a6fc0"/><path d="M3.3 .5v2.5M9.7 .5v2.5" stroke="#1a6fc0" stroke-width="1.6"/><g fill="#fff"><rect x="2" y="6" width="2" height="1.7"/><rect x="5.5" y="6" width="2" height="1.7"/><rect x="9" y="6" width="2" height="1.7"/><rect x="2" y="9.3" width="2" height="1.7"/><rect x="5.5" y="9.3" width="2" height="1.7"/><rect x="9" y="9.3" width="2" height="1.7"/></g></svg>
<div class="a" style="left:306px;top:888px;width:1489px;height:1px;background:#e8edf3"></div>
<svg style="left:327.7px;top:862.25px" width="17" height="16" viewBox="0 0 17 16"><rect x="0.5" y="2.3" width="12" height="11.7" rx="1.3" fill="#b9bcc1"/><path d="M3.3 .3v2.5M9.7 .3v2.5M3.3 13.5v2.2M9.7 13.5v2.2" stroke="#b9bcc1" stroke-width="1.4"/><circle cx="12.3" cy="11.3" r="4.3" fill="#4f545b" stroke="#fff" stroke-width="1"/><path d="M12.3 9.2v2.3l1.4 1" stroke="#fff" stroke-width="1" fill="none"/></svg>
<div class="t" style="left:378.3px;top:903.15px;font-size:14px;color:#3b3f47;font-weight:bold;">11.07.2025</div>
<svg style="left:1745.5px;top:903px" width="13" height="9" viewBox="0 0 13 9"><path d="M1 7.5l5.5-5.5 5.5 5.5" fill="none" stroke="#21729f" stroke-width="1.9"/></svg>
<div class="a" style="left:241px;top:908px;width:1608px;height:17px;background:#fafbfd"></div>
<svg style="left:0;top:0" width="1849" height="925" viewBox="0 0 1849 925"><path d="M553.4 123L553.4 156.3L560.9 149.5L566.2 160.5L570.7 157.8L566.5 147.4L577.5 147.4Z" fill="#fff" stroke="#0b1836" stroke-width="1.3" stroke-linejoin="miter"/></svg></body></html>
